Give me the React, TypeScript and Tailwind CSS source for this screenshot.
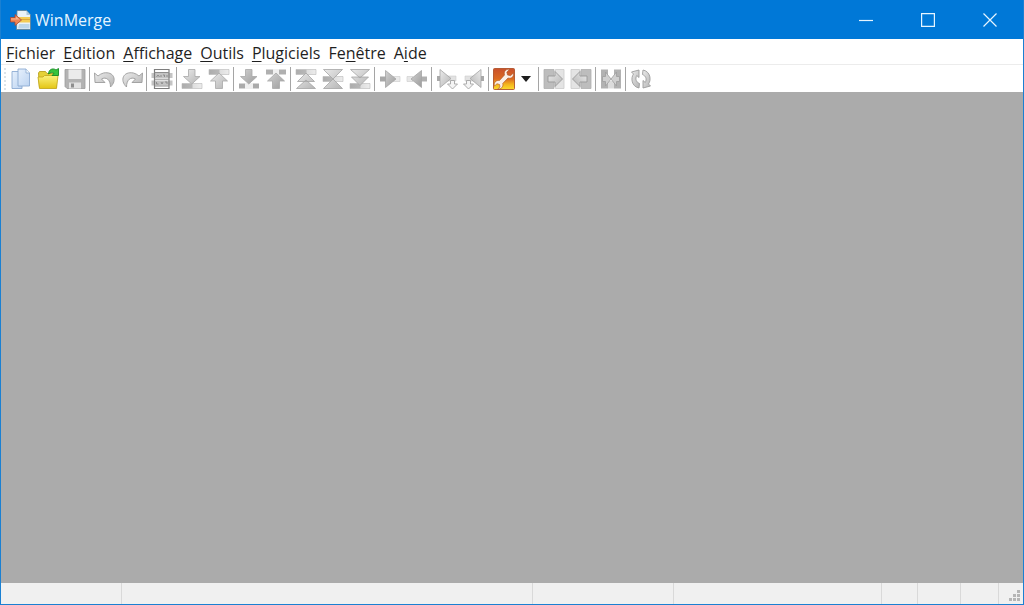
import type { ReactNode } from "react";

interface MenuEntry {
  before: string;
  key: string;
  after: string;
}

interface ToolProps {
  label: string;
  children: ReactNode;
}

const MENUS: MenuEntry[] = [
  { before: "", key: "F", after: "ichier" },
  { before: "", key: "E", after: "dition" },
  { before: "", key: "A", after: "ffichage" },
  { before: "", key: "O", after: "utils" },
  { before: "", key: "P", after: "lugiciels" },
  { before: "Fe", key: "n", after: "être" },
  { before: "A", key: "i", after: "de" },
];

// Gradients shared by every toolbar icon
function IconDefs() {
  return (
    <svg className="absolute size-0" aria-hidden="true">
      <defs>
        <linearGradient id="gray" x1="0" y1="0" x2="1" y2="1">
          <stop offset="0" stopColor="#ebebeb" />
          <stop offset="1" stopColor="#b4b4b4" />
        </linearGradient>
        <linearGradient id="dark" x1="0" y1="0" x2="1" y2="1">
          <stop offset="0" stopColor="#d2d2d2" />
          <stop offset="1" stopColor="#9c9c9c" />
        </linearGradient>
        <linearGradient id="bar" x1="0" y1="0" x2="1" y2="0">
          <stop offset="0" stopColor="#acacac" />
          <stop offset="0.5" stopColor="#b8b8b8" />
          <stop offset="0.55" stopColor="#dedede" />
          <stop offset="1" stopColor="#ececec" />
        </linearGradient>
        <linearGradient id="paper" x1="0" y1="0" x2="1" y2="1">
          <stop offset="0" stopColor="#e6f0fc" />
          <stop offset="1" stopColor="#bdd4f1" />
        </linearGradient>
        <linearGradient id="folder" x1="0" y1="0" x2="0" y2="1">
          <stop offset="0" stopColor="#fbf27c" />
          <stop offset="1" stopColor="#e3c514" />
        </linearGradient>
        <linearGradient id="settings" x1="0" y1="0" x2="0" y2="1">
          <stop offset="0" stopColor="#c9502c" />
          <stop offset="0.5" stopColor="#dc6b22" />
          <stop offset="0.75" stopColor="#f3b41d" />
          <stop offset="1" stopColor="#fbdc2c" />
        </linearGradient>
      </defs>
    </svg>
  );
}

function Tool({ label, children }: ToolProps) {
  return (
    <button
      type="button"
      aria-label={label}
      className="flex h-full w-[27px] shrink-0 items-center justify-center hover:bg-sky-100"
    >
      <svg viewBox="0 0 22 22" className="size-[22px]" aria-hidden="true">
        {children}
      </svg>
    </button>
  );
}

function Separator() {
  return (
    <div className="flex w-[3px] shrink-0 justify-center">
      <div className="w-px bg-[#a5a5a5]" />
    </div>
  );
}

function DownArrow({ fill = "url(#gray)" }: { fill?: string }) {
  return (
    <path
      d="M7.5 1.5h6.5v7h5l-8.200 7.500L2.500 8.500h5z"
      fill={fill}
      stroke="#a8a8a8"
      strokeWidth="0.8"
    />
  );
}

function UpArrow({ fill = "url(#gray)" }: { fill?: string }) {
  return (
    <path
      d="M7.500 20.500v-7.500H2.500L11 5l8.500 8H14.500v7.500z"
      fill={fill}
      stroke="#a8a8a8"
      strokeWidth="0.8"
    />
  );
}

function CopyArrow() {
  return (
    <>
      <path d="M12 8h8v5h-8z" fill="#e2e2e2" stroke="#cfcfcf" strokeWidth="0.6" />
      <path d="M1 8h4v5H1z" fill="#a9a9a9" />
      <path d="M4 1.500l11 9L4 19.500z" fill="url(#gray)" stroke="#a4a4a4" strokeWidth="0.8" />
      <path d="M14.500 12.500h4V16h3l-5 5-5-5h3z" fill="#f4f4f4" stroke="#a4a4a4" strokeWidth="0.9" />
    </>
  );
}

function CopyAll() {
  return (
    <>
      <path d="M1 1.500h10v19H1z" fill="#bdbdbd" stroke="#b0b0b0" strokeWidth="0.8" />
      <path d="M12.500 1.500h8.500v19h-8.500z" fill="#e4e4e4" stroke="#cacaca" strokeWidth="0.8" />
      <path d="M5 8h7V3.500l7.500 7.500-7.500 7.500V14H5z" fill="url(#gray)" stroke="#999" strokeWidth="0.9" />
    </>
  );
}

function Title() {
  return (
    <header className="flex h-[39px] shrink-0 items-center justify-between bg-[#0078d7] text-[#e6f5ff]">
      <div className="flex items-center gap-[3px] pl-[9px]">
        <svg viewBox="0 0 22 22" className="size-[22px]" aria-hidden="true">
          <path d="M7 1.500h9.500L20.500 6v14.500h-14z" fill="#eaf2f8" stroke="#5e7d91" strokeWidth="0.8" />
          <path d="M16.500 1.500V6h4z" fill="#adc8da" />
          <path d="M8 8h12v5.500H8z" fill="#f4cc55" />
          <path d="M8 10.500h12" stroke="#d9a73a" />
          <path d="M9 15h10.500v4.500H8z" fill="#bcd6ea" />
          <path d="M0.500 8.500h4.500V5.500l6.500 5.500L5 16.500v-3.500H.500z" fill="#ef8455" stroke="#a94932" strokeWidth="0.8" />
          <path d="M1 9.500h5V7.500l3.500 3h-8.500z" fill="#f7b38d" />
        </svg>
        <h1 className="text-base">WinMerge</h1>
      </div>
      <div className="flex h-full pr-[2px]">
        <button type="button" aria-label="Réduire" className="flex w-[62px] items-center justify-center hover:bg-white/10">
          <svg viewBox="0 0 14 14" className="size-[14px]" fill="none" stroke="currentColor" strokeWidth="1.200">
            <path d="M0 7.500h14" />
          </svg>
        </button>
        <button type="button" aria-label="Agrandir" className="flex w-[62px] items-center justify-center hover:bg-white/10">
          <svg viewBox="0 0 14 14" className="size-[14px]" fill="none" stroke="currentColor" strokeWidth="1.200">
            <path d="M0.600 0.600h12.800v12.800H0.600z" />
          </svg>
        </button>
        <button type="button" aria-label="Fermer" className="flex w-[62px] items-center justify-center hover:bg-red-600">
          <svg viewBox="0 0 14 14" className="size-[14px]" fill="none" stroke="currentColor" strokeWidth="1.200">
            <path d="M0.500 0.500l13 13M13.500 0.500l-13 13" />
          </svg>
        </button>
      </div>
    </header>
  );
}

function Toolbar() {
  return (
    <div role="toolbar" className="flex h-7 shrink-0 border-t border-[#ececec] bg-white pt-[2px] pb-px pl-[3px]">
      <div className="my-px w-[3px] shrink-0 border-l-2 border-dotted border-[#dce3e8]" />
      <Tool label="Nouveau">
        <path d="M2 3.500h8l2 2V20.500H2z" fill="url(#paper)" stroke="#8dacd2" strokeWidth="0.9" />
        <path d="M8 1h8l3.500 4V18H8z" fill="url(#paper)" stroke="#8dacd2" strokeWidth="0.9" />
        <path d="M16 1v4h3.500" fill="#f3f8fe" stroke="#8dacd2" strokeWidth="0.8" />
      </Tool>
      <Tool label="Ouvrir">
        <path d="M1.500 5l1-1.500h6L10 5.500h9.500v14h-17z" fill="#e5d137" stroke="#b9a11d" strokeWidth="0.9" />
        <path d="M1 9h5l1.500-1.500H21l-1.500 13h-17z" fill="url(#folder)" stroke="#c5aa20" strokeWidth="0.9" />
        <path d="M11.500 6C11.500 1.500 16 -.500 19 2L21.500 .500v7H15l2-2C15.500 4 13.500 4.500 11.500 6z" fill="#37c33c" stroke="#168b25" strokeWidth="0.9" />
      </Tool>
      <Tool label="Enregistrer">
        <path d="M1 1.500h20v19H3L1 18.500z" fill="#b3b3b3" stroke="#9c9c9c" strokeWidth="0.8" />
        <path d="M4.500 1.500h13v9.500h-13z" fill="#ebebeb" />
        <path d="M5 14.500h12v6H5z" fill="#e2e2e2" />
        <path d="M7 15.500h3v4H7z" fill="#8e8e8e" />
      </Tool>

      <Separator />
      <Tool label="Annuler">
        <path d="M.500 5L1 14.500h10L7.500 11C12 8.500 16.500 11.500 16.500 19C23.500 12.500 20 3 9.500 5Q6.500 5.800 4 8z" fill="url(#gray)" stroke="#9c9c9c" strokeWidth="0.9" />
      </Tool>
      <Tool label="Rétablir">
        <path d="M21.500 5L21 14.500H11l3.500-3.500C10 8.500 5.500 11.500 5.500 19C-1.500 12.500 2 3 12.500 5Q15.500 5.800 18 8z" fill="url(#gray)" stroke="#9c9c9c" strokeWidth="0.9" />
      </Tool>

      <Separator />
      <Tool label="Sélectionner la différence de ligne">
        <path d="M.500 5h21v5H.500zM.500 12.500h21v5H.500z" fill="#c4c4c4" />
        <path d="M3.500 1.500h14.500v19H3.500z" fill="none" stroke="#7d7d7d" strokeWidth="1.200" />
        <path d="M3.500 4.500h14.500M3.500 11.200h14.500M3.500 18h14.500" stroke="#8e8e8e" />
        <path d="M5.500 9l1.500-2 1.500 2M10 7v2M12 7h1.500v2M16 7v2M5.500 14v2h2M10 14l1 2 1-2M14 14h2v2" fill="none" stroke="#808080" strokeWidth="0.8" />
      </Tool>

      <Separator />
      <Tool label="Différence suivante">
        <path d="M1 15.500h20v5H1z" fill="url(#bar)" stroke="#b8b8b8" strokeWidth="0.6" />
        <DownArrow />
      </Tool>
      <Tool label="Différence précédente">
        <path d="M1 1.500h20v5H1z" fill="url(#bar)" stroke="#b8b8b8" strokeWidth="0.6" />
        <UpArrow />
      </Tool>

      <Separator />
      <Tool label="Conflit suivant">
        <path d="M1 15.500h20v5H1z" fill="#aaa" />
        <path d="M7 15h8v6H7z" fill="#efefef" />
        <DownArrow fill="url(#dark)" />
      </Tool>
      <Tool label="Conflit précédent">
        <path d="M1 1.500h20v5H1z" fill="#b0b0b0" />
        <path d="M8 1h6v6H8z" fill="#efefef" />
        <UpArrow fill="url(#dark)" />
      </Tool>

      <Separator />
      <Tool label="Première différence">
        <path d="M1 1.500h20v5H1z" fill="url(#bar)" stroke="#b8b8b8" strokeWidth="0.6" />
        <path d="M2.500 13.500L11 5l8.500 8.500zM1.500 20.500L11 12l9.500 8.500z" fill="url(#gray)" stroke="#a4a4a4" strokeWidth="0.8" />
      </Tool>
      <Tool label="Différence courante">
        <path d="M1 8.500h20v5H1z" fill="url(#bar)" stroke="#b8b8b8" strokeWidth="0.6" />
        <path d="M1.500 1.500h19L11 11zM1.500 20.500L11 11l9.500 9.500z" fill="url(#gray)" stroke="#a4a4a4" strokeWidth="0.8" />
      </Tool>
      <Tool label="Dernière différence">
        <path d="M1 15.500h20v5H1z" fill="url(#bar)" stroke="#b8b8b8" strokeWidth="0.6" />
        <path d="M1.500 1.500h19L11 10zM2.500 9h17L11 17.500z" fill="url(#gray)" stroke="#a4a4a4" strokeWidth="0.8" />
      </Tool>

      <Separator />
      <Tool label="Copier à droite">
        <path d="M14 8.500h7v5h-7z" fill="#eaeaea" stroke="#d0d0d0" strokeWidth="0.7" />
        <path d="M1 8.500h6v5H1z" fill="#a8a8a8" />
        <path d="M6.500 2.500l10.500 8.500-10.500 8.500z" fill="url(#dark)" stroke="#a4a4a4" strokeWidth="0.8" />
      </Tool>
      <Tool label="Copier à gauche">
        <path d="M1 8.500h6v5H1z" fill="#e7e7e7" stroke="#d0d0d0" strokeWidth="0.7" />
        <path d="M15 8.500h6v5h-6z" fill="#b0b0b0" />
        <path d="M15.500 2.500L5 11l10.500 8.500z" fill="url(#dark)" stroke="#a4a4a4" strokeWidth="0.8" />
      </Tool>

      <Separator />
      <Tool label="Copier à droite et avancer">
        <CopyArrow />
      </Tool>
      <Tool label="Copier à gauche et avancer">
        <g transform="matrix(-1 0 0 1 22 0)">
          <CopyArrow />
        </g>
      </Tool>

      <Separator />
      <Tool label="Options">
        <rect x="0.500" y="0.500" width="21" height="21" rx="1" fill="url(#settings)" stroke="#b0522a" strokeWidth="0.9" />
        <path
          d="M20.500 5l-3 2.700-3-.700-.700-3L16.500 1.500C13 .700 10.500 3.500 11.500 7L6.500 12.500c-3.500-.500-6 2-5 5.500L4 15.700l2.500.800.500 2.500-2.300 2c3.500.500 6-2.500 5-5.500l5.300-5.500c3.500 1 6-1.500 5.500-5z"
          fill="#fbefe6"
          stroke="#a94f22"
          strokeWidth="0.600"
        />
      </Tool>
      <button type="button" aria-label="Choisir les options" className="flex w-5 shrink-0 items-center pl-1 hover:bg-sky-100">
        <svg viewBox="0 0 10 6" className="h-[6px] w-[10px]" aria-hidden="true">
          <path d="M0 0h10L5 6z" fill="#1d1d1d" />
        </svg>
      </button>

      <Separator />
      <Tool label="Tout copier à droite">
        <CopyAll />
      </Tool>
      <Tool label="Tout copier à gauche">
        <g transform="matrix(-1 0 0 1 22 0)">
          <CopyAll />
        </g>
      </Tool>

      <Separator />
      <Tool label="Fusion automatique">
        <path d="M1 1.500h7v19H1zM14 1.500h7v19h-7z" fill="#b2b2b2" />
        <path d="M8 13h6v7.500H8z" fill="#dcdcdc" />
        <path d="M2.500 8.500h3V4l5.500 7-5.500 7v-4.500h-3zM19.500 8.500h-3V4L11 11l5.500 7v-4.500h3z" fill="#d0d0d0" stroke="#9e9e9e" strokeWidth="0.8" />
      </Tool>

      <Separator />
      <Tool label="Rafraîchir">
        <path d="M9 20C1.500 18.500 .500 10 3.500 6L1.500 4 9 2v7.500L6.700 7.500C5 11 6 14 9.500 15.500z" fill="url(#gray)" stroke="#9c9c9c" strokeWidth="0.9" />
        <path d="M13 2C20.500 3.500 21.500 12 18.500 16l2 2-7.500 2v-7.500l2.300 2C17 11 16 8 12.500 6.500z" fill="url(#gray)" stroke="#9c9c9c" strokeWidth="0.9" />
      </Tool>
    </div>
  );
}

function StatusBar() {
  return (
    <footer className="flex h-[21px] shrink-0 bg-[#f0f0f0]">
      <div className="w-[121px] border-r border-[#d9d9d9]" />
      <div className="min-w-0 flex-1 border-r border-[#d9d9d9]" />
      <div className="w-[141px] border-r border-[#d9d9d9]" />
      <div className="w-52 border-r border-[#d9d9d9]" />
      <div className="w-9 border-r border-[#d9d9d9]" />
      <div className="w-[43px] border-r border-[#d9d9d9]" />
      <div className="w-[38px] border-r border-[#d9d9d9]" />
      <div className="flex w-6 items-end justify-end pr-[3px] pb-[3px]">
        <svg viewBox="0 0 11 11" className="size-[11px]" fill="#b5b5b5" aria-hidden="true">
          <path d="M8 0h3v3H8zM4 4h3v3H4zM8 4h3v3H8zM0 8h3v3H0zM4 8h3v3H4zM8 8h3v3H8z" />
        </svg>
      </div>
    </footer>
  );
}

export default function App() {
  return (
    <div className="flex min-h-screen flex-col border border-t-0 border-[#1a80d2] bg-white font-['Open_Sans','Noto_Sans',sans-serif] text-[#1f1f1f]">
      <IconDefs />
      <Title />
      <nav className="flex h-[25px] shrink-0 items-center gap-2 pt-[3px] pl-[5px] text-base">
        {MENUS.map((menu) => (
          <button key={menu.key} type="button" className="whitespace-nowrap hover:bg-sky-100">
            {menu.before}
            <span className="underline underline-offset-2">{menu.key}</span>
            {menu.after}
          </button>
        ))}
      </nav>
      <Toolbar />
      <main className="flex-1 bg-[#ababab]" />
      <StatusBar />
    </div>
  );
}
